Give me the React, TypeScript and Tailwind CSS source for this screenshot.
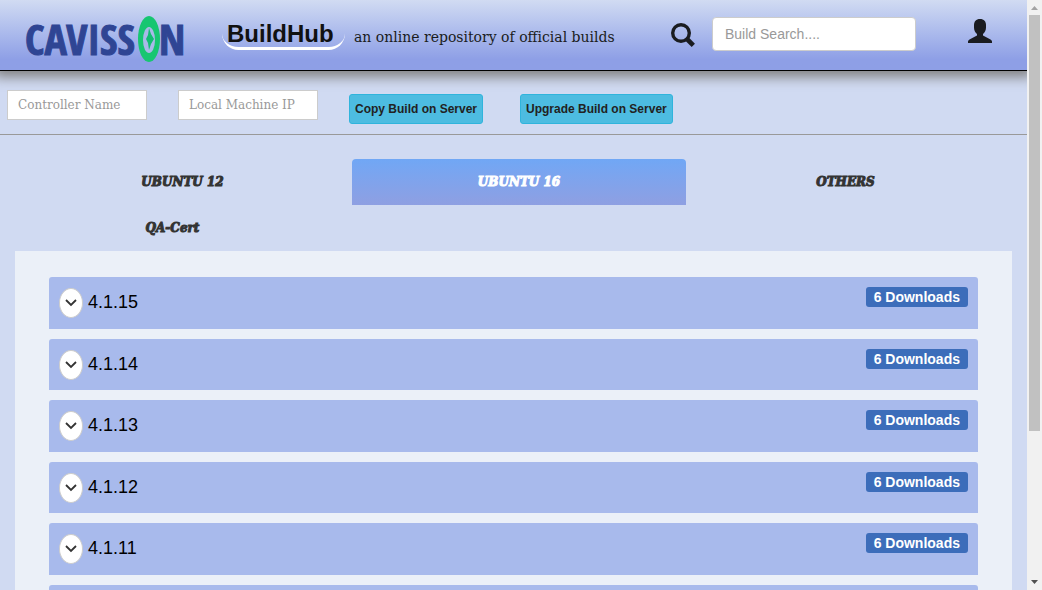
import React from "react";

const versions = ["4.1.15", "4.1.14", "4.1.13", "4.1.12", "4.1.11", "4.1.10", "4.1.9"];
const tabs = ["UBUNTU 12", "UBUNTU 16", "OTHERS", "QA-Cert"];

function Logo() {
  return (
    <svg className="block h-12 w-40 shrink-0" viewBox="0 0 160 48" role="img" aria-label="Cavisson">
      <g
        fill="#2f4594"
        stroke="#2f4594"
        strokeWidth="1"
        fontWeight="700"
        fontSize="42"
        fontFamily="'Open Sans Condensed','Noto Sans ExtraCondensed','Noto Sans Condensed','Liberation Sans Narrow','DejaVu Sans Condensed',sans-serif"
      >
        <text x="0" y="40">CAVISS</text>
        <text x="134" y="40">N</text>
      </g>
      <ellipse cx="124" cy="24" rx="11" ry="23" fill="#17c671" />
      <ellipse cx="124" cy="25" rx="6" ry="13" fill="#a9b9e8" />
      <path d="M124 13L126 19L129 24L126 29L124 35L123 28L121 24L123 20Z" fill="#12bd72" />
    </svg>
  );
}

function SearchIcon() {
  return (
    <svg className="size-6" viewBox="0 0 24 24" fill="none" stroke="#1a1c20" aria-hidden="true">
      <circle cx="10" cy="10" r="8.3" strokeWidth="3.4" />
      <path d="M16 16L22.3 22.3" strokeWidth="4.6" />
    </svg>
  );
}

function UserIcon() {
  return (
    <svg className="block size-6" viewBox="0 0 24 24" fill="#1a1c20" aria-hidden="true">
      <path d="M12 0C8 0 6 2.6 6 6V8.500C6 11.500 7.200 13.500 9 15V16.500L1.500 20.500Q0 21.300 0 22.500V24H24V22.500Q24 21.300 22.500 20.500L15 16.500V15C16.800 13.500 18 11.500 18 8.500V6C18 2.600 16 0 12 0Z" />
    </svg>
  );
}

function Header() {
  return (
    <header className="relative flex h-[71px] items-start border-b border-black bg-linear-to-b from-[#d1dbf2] to-[#8e9fe6] to-85% pr-[35px] pl-[25px] shadow-[0_0_12px_6px_#808080]">
      <a href="#home" className="mt-[15px]">
        <Logo />
      </a>
      <h1 className="mt-[17px] ml-[37px] h-[33px] w-[123px] rounded-[20px] border-b-3 border-white pt-px pl-[5px] text-2xl font-bold text-[#111]">
        BuildHub
      </h1>
      <p className="mt-[27px] ml-[9px] font-['DejaVu_Serif',serif] text-sm text-[#1a1c20]">
        an online repository of official builds
      </p>
      <form className="mt-[17px] ml-auto flex items-center" onSubmit={(e) => e.preventDefault()}>
        <button type="submit" aria-label="Search" className="mt-[2px] mr-[17px]">
          <SearchIcon />
        </button>
        <input
          type="search"
          aria-label="Build search"
          placeholder="Build Search...."
          className="h-[34px] w-[204px] rounded border border-[#ccc] bg-white px-3 text-sm placeholder:text-[#999]"
        />
      </form>
      <button type="button" aria-label="Account" className="mt-[19px] ml-[52px]">
        <UserIcon />
      </button>
    </header>
  );
}

function Toolbar() {
  const field =
    "relative h-[30px] w-[140px] border border-[#ccc] bg-white px-[10px] font-['DejaVu_Serif',serif] text-xs placeholder:text-[#999]";
  const button =
    "mt-1 h-[30px] rounded-[3px] border border-[#30b4dc] bg-[#4dbce1] px-[5px] text-xs font-bold text-[#222]";
  return (
    <div className="flex h-16 items-start border-b border-[#999] pt-[19px] pl-[7px]">
      <input aria-label="Controller name" placeholder="Controller Name" className={field} />
      <input aria-label="Local machine IP" placeholder="Local Machine IP" className={`${field} ml-[31px]`} />
      <button type="button" className={`${button} ml-[31px]`}>
        Copy Build on Server
      </button>
      <button type="button" className={`${button} ml-[37px]`}>
        Upgrade Build on Server
      </button>
    </div>
  );
}

function Tabs() {
  return (
    <nav className="mt-6 mr-6 ml-[15px] grid grid-cols-[335fr_334fr_315fr] gap-x-0.5" role="tablist">
      {tabs.map((tab) => (
        <button
          key={tab}
          type="button"
          role="tab"
          aria-selected={tab === "UBUNTU 16"}
          className={`h-[46px] rounded-t font-['DejaVu_Serif',serif] text-xs font-black italic [-webkit-text-stroke:1px] ${
            tab === "UBUNTU 16" ? "bg-linear-to-b from-[#70a7f5] to-[#8e9fe2] text-white" : "text-[#333]"
          } ${tab === "QA-Cert" ? "pr-5" : ""}`}
        >
          {tab}
        </button>
      ))}
    </nav>
  );
}

function BuildRow({ version }: { version: string }) {
  return (
    <li className="flex items-start rounded-t-[3px] bg-[#a8baec] p-[10px]">
      <button
        type="button"
        aria-label={`Expand ${version}`}
        className="mt-px flex h-[30px] w-6 items-center justify-center rounded-[50%] border border-[#ccc] bg-white"
      >
        <svg className="h-2 w-3" viewBox="0 0 12 8" fill="none" stroke="#333" strokeWidth="1.8" aria-hidden="true">
          <path d="M1 1L6 6L11 1" />
        </svg>
      </button>
      <h2 className="ml-[5px] text-lg leading-[1.75] text-black">{version}</h2>
      <span className="ml-auto h-5 rounded-[3px] bg-[#3c6dba] px-2 text-sm leading-5 font-bold text-white">
        6 Downloads
      </span>
    </li>
  );
}

function ScrollRail() {
  return (
    <div className="relative flex w-[15px] shrink-0 flex-col items-center bg-[#f1f1f1]" aria-hidden="true">
      <svg className="h-[15px] w-[15px] shrink-0" viewBox="0 0 15 15">
        <path d="M4 10H11L7.500 6Z" fill="#a3a3a3" />
      </svg>
      <div className="w-[11px] grow-[416] basis-0 bg-[#c1c1c1]" />
      <div className="grow-[144] basis-0" />
      <svg className="h-[15px] w-[15px] shrink-0" viewBox="0 0 15 15">
        <path d="M4 5H11L7.500 9Z" fill="#505050" />
      </svg>
    </div>
  );
}

export default function App() {
  return (
    <div className="flex h-screen bg-[#d0daf2] font-['Liberation_Sans',Arial,sans-serif]">
      <div className="min-w-0 flex-1 overflow-x-hidden overflow-y-auto [scrollbar-width:none]">
        <Header />
        <Toolbar />
        <Tabs />
        <main className="mx-[15px] bg-[#ebf0f8] px-[34px] pt-[26px] pb-6">
          <ul className="flex flex-col gap-[10px]">
            {versions.map((version) => (
              <BuildRow key={version} version={version} />
            ))}
          </ul>
        </main>
      </div>
      <ScrollRail />
    </div>
  );
}
